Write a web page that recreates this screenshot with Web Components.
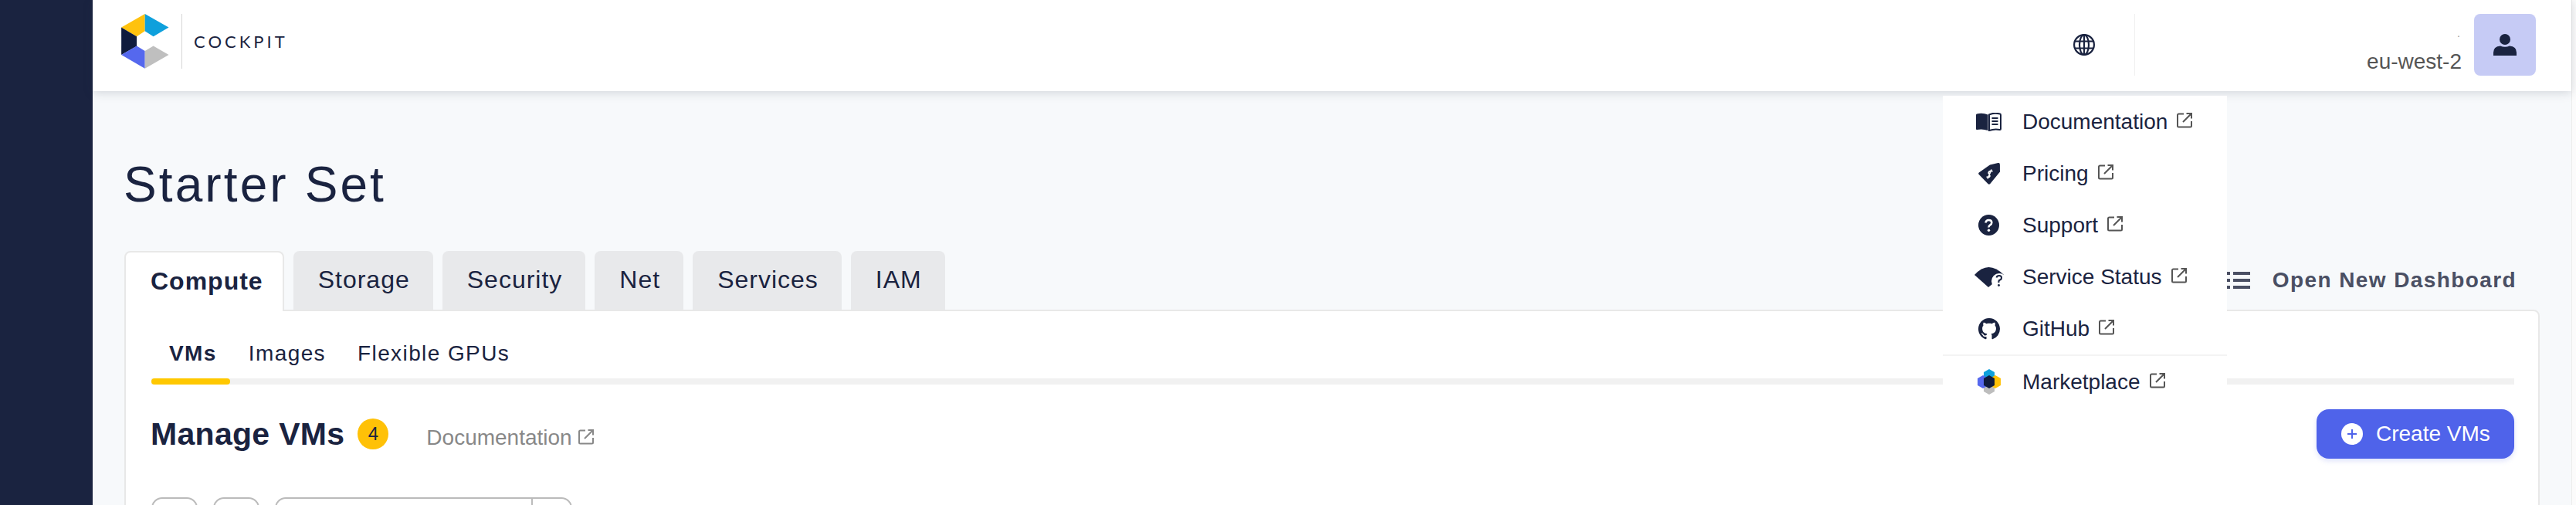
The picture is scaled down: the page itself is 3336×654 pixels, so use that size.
<!DOCTYPE html>
<html>
<head>
<meta charset="utf-8">
<title>Cockpit</title>
<style>
  html, body { margin: 0; height: 100%; overflow: hidden; }
  body { font-family: "Liberation Sans", Arial, sans-serif; color: #1a2340; background: #f7f9fb; }
</style>
</head>
<body>
<cockpit-app></cockpit-app>

<script>
const EXT_ICON = `<svg class="ext" width="20" height="20" viewBox="0 0 20 20" fill="none" stroke="#555" stroke-width="2"><path d="M9 1.5H2.5a1.5 1.5 0 0 0-1.5 1.5v14a1.5 1.5 0 0 0 1.500 1.500h15a1.500 1.500 0 0 0 1.500-1.500V11"/><path d="M8 12 19 1M12.500 1H19v6.500"/></svg>`;

const ICONS = {
  book: `<svg width="33" height="24" viewBox="0 0 33 24"><path fill="#1a2340" d="M0 3q0-1 1-1.400Q8-.5 15.500 2.500V23q-7-2.500-14.500-1q-1 0-1-1z"/><path fill="none" stroke="#1a2340" stroke-width="2" d="M17 2.500Q23-.5 31 1.500q1 .3 1 1.500v18q0 1-1 1q-7-1.500-14 1zM20.500 7h8M20.500 11h8M20.500 15h8"/></svg>`,
  tag: `<svg width="28" height="28" viewBox="0 0 28 28"><path fill="#1a2340" d="M.8 12.500 15 2.500 25.500 0q2.300-.3 2.400 2L28 11.500 15.300 27q-1.200 1.400-2.600.3L.8 15q-1.200-1.300 0-2.500z"/><path fill="none" stroke="#fff" stroke-width="1.700" d="M18.500 11q-2.300-1.500-4.200 0t-.5 3.200 1 3.300-4.300 .5M17 8.500 12 20.500"/></svg>`,
  help: `<svg width="27" height="27" viewBox="0 0 27 27"><circle cx="13.500" cy="13.500" r="13.500" fill="#1a2340"/><path fill="none" stroke="#fff" stroke-width="2.600" d="M9.500 10.500q.3-3.500 4-3.500t3.800 3.200q0 2-2 3.200t-1.800 3.100"/><circle cx="13.500" cy="20.300" r="1.700" fill="#fff"/></svg>`,
  status: `<svg width="38" height="26" viewBox="0 0 38 26"><path fill="#1a2340" d="M0 10Q18-10 38 10L18 26z"/><circle cx="32" cy="18" r="10" fill="#fff"/><path fill="none" stroke="#1a2340" stroke-width="2" d="M28.500 13.500q.5-2.500 3.500-2.500t3 2.500-2 3-1.500 3.500"/><circle cx="31.500" cy="23.500" r="1.400" fill="#1a2340"/></svg>`,
  github: `<svg width="28" height="28" viewBox="0 0 16 16"><path fill="#1a2340" d="M8 0C3.580 0 0 3.580 0 8c0 3.540 2.290 6.530 5.470 7.590.4.070.55-.17.55-.38 0-.19-.01-.82-.01-1.490-2.010.37-2.530-.49-2.690-.94-.09-.23-.48-.94-.82-1.130-.28-.15-.68-.52-.01-.53.63-.01 1.080.58 1.230.82.72 1.210 1.870.87 2.330.66.070-.52.28-.87.51-1.070-1.780-.2-3.640-.89-3.640-3.950 0-.87.31-1.590.82-2.150-.08-.2-.36-1.020.08-2.120 0 0 .67-.21 2.200.82.64-.18 1.320-.27 2-.27.68 0 1.360.09 2 .27 1.530-1.040 2.200-.82 2.200-.82.44 1.100.16 1.920.08 2.120.51.56.82 1.270.82 2.150 0 3.070-1.870 3.750-3.650 3.950.29.25.54.73.54 1.480 0 1.070-.01 1.930-.01 2.200 0 .21.15.46.55.38A8.013 8.013 0 0 0 16 8c0-4.420-3.580-8-8-8z"/></svg>`,
  market: `<svg width="30" height="33" viewBox="0 0 30 33"><path fill="#0ea0dc" d="M15 0l7 4v8l-7 4-7-4V4z"/><path fill="#bdbdbd" d="M15 17l7 4v8l-7 4-7-4v-8z"/><path fill="#5568ee" d="M7 8l7 4v9l-7 4-7-4v-9z"/><path fill="#ffc107" d="M23 8l7 4v9l-7 4-7-4v-9z"/><path fill="#0f1b3d" d="M15 8l7 4v9l-7 4-7-4v-9z"/></svg>`
};

class CockpitLogo extends HTMLElement {
  constructor() {
    super();
    this.attachShadow({ mode: 'open' }).innerHTML = `
      <style>
        :host { display: flex; align-items: center; height: 71px; margin-bottom: 9px; }
        .sep { width: 1px; height: 71px; background: #d6d6d6; margin: 0 15px 0 16px; }
        span { font-family: Lato, sans-serif; font-weight: 400; font-size: 22px; letter-spacing: 4px; color: #1a2340; }
        svg { display: block; }
      </style>
      <svg width="62" height="71" viewBox="80 55 186 214">
        <path fill="#ffc20e" d="M172 55v67l-32 21-60-35z"/>
        <path fill="#0ea0dc" d="M172 55l93 53-60 35-33-21z"/>
        <path fill="#0f1b3d" d="M80 108l60 35v38l-60 34z"/>
        <path fill="#5568ee" d="M80 215l60-35 32 20v68z"/>
        <path fill="#bfbfbf" d="M172 200l33-20 60 35-93 53z"/>
      </svg>
      <div class="sep"></div>
      <span>COCKPIT</span>`;
  }
}

class TopBar extends HTMLElement {
  constructor() {
    super();
    this.attachShadow({ mode: 'open' }).innerHTML = `
      <style>
        :host { display: flex; align-items: center; height: 118px; box-sizing: border-box; padding: 0 46px 2px 37px; background: #fff; box-shadow: 0 2px 12px rgba(40, 50, 70, .18); position: relative; z-index: 2; }
        .fill { flex: 1; }
        .globe { display: block; }
        .sep { width: 1px; height: 80px; background: #f0f0f0; margin-left: 51px; }
        .region { flex: 0 0 auto; width: 423px; margin: 14px 16px 0 0; text-align: right; font-size: 28px; line-height: 32px; color: #555; }
        .region div:first-child { font-size: 14px; line-height: 18px; color: #999; padding-bottom: 12px; padding-right: 2px; }
        .avatar { width: 80px; height: 80px; border-radius: 8px; background: #c6cbf5; display: flex; align-items: center; justify-content: center; }
      </style>
      <cockpit-logo></cockpit-logo>
      <div class="fill"></div>
      <svg class="globe" width="28" height="28" viewBox="0 0 28 28" fill="none" stroke="#1a2340" stroke-width="2.200">
        <circle cx="14" cy="14" r="12.900"/>
        <ellipse cx="14" cy="14" rx="6" ry="12.900"/>
        <path d="M14 1v26M2 9.500h24M2 18.500h24"/>
      </svg>
      <div class="sep"></div>
      <div class="region"><div>.</div><div>eu-west-2</div></div>
      <div class="avatar">
        <svg width="30" height="28" viewBox="0 0 30 28" fill="#1a2340"><circle cx="15" cy="7" r="7"/><path d="M0 28v-4q0-8 9-8.500 6 2.500 12 0 9 .5 9 8.500v4z"/></svg>
      </div>`;
  }
}

class MenuItem extends HTMLElement {
  constructor() {
    super();
    this.attachShadow({ mode: 'open' }).innerHTML = `
      <style>
        :host { display: flex; align-items: center; height: 67px; font-size: 28px; color: #1a2340; }
        .ico { flex: none; width: 103px; box-sizing: border-box; padding: 0 22px 0 38px; display: flex; justify-content: center; }
        .ext { margin: -4px 0 0 12px; display: block; }
      </style>
      <div class="ico"><slot name="icon"></slot></div>
      <slot></slot>${EXT_ICON}`;
  }
}

class ResourcesMenu extends HTMLElement {
  constructor() {
    super();
    const row = (icon, label) => `<menu-item><span slot="icon">${ICONS[icon]}</span>${label}</menu-item>`;
    this.attachShadow({ mode: 'open' }).innerHTML = `
      <style>
        :host { position: absolute; left: 2516px; top: 124px; width: 368px; height: 410px; background: #fff; z-index: 3; display: block; }
        hr { height: 2px; border: 0; margin: 0; background: #f4f4f4; }
        span { display: block; line-height: 0; }
      </style>
      ${row('book', 'Documentation')}
      ${row('tag', 'Pricing')}
      ${row('help', 'Support')}
      ${row('status', 'Service Status')}
      ${row('github', 'GitHub')}
      <hr>
      ${row('market', 'Marketplace')}`;
  }
}

class TabStrip extends HTMLElement {
  constructor() {
    super();
    const tabs = ['Compute', 'Storage', 'Security', 'Net', 'Services', 'IAM'];
    this.attachShadow({ mode: 'open' }).innerHTML = `
      <style>
        :host { display: flex; align-items: flex-end; height: 78px; gap: 12px; margin-bottom: -2px; position: relative; z-index: 1; }
        .tab { height: 76px; padding: 0 30px 2px 32px; display: flex; align-items: center; font-size: 32px; letter-spacing: 1px; border-radius: 8px 8px 0 0; background: #e8e9eb; color: #1a2340; box-sizing: border-box; margin-bottom: 2px; }
        .tab.on { height: 78px; margin-bottom: 0; font-weight: 700; background: #fff; border: 2px solid #e8e8e8; border-bottom: 0; padding: 0 25px 2px 32px; }
        .fill { flex: 1; }
        .open { display: flex; align-items: center; gap: 29px; height: 78px; margin-right: 30px; padding-bottom: 2px; box-sizing: border-box; font-size: 28px; font-weight: 700; letter-spacing: 1.400px; color: #4a4f63; }
        svg { display: block; }
      </style>
      ${tabs.map((t, i) => `<div class="tab${i ? '' : ' on'}">${t}</div>`).join('')}
      <div class="fill"></div>
      <div class="open">
        <svg width="30" height="22" viewBox="0 0 30 22" fill="#4a4f63"><path d="M0 0h4v4H0zM0 9h4v4H0zM0 18h4v4H0zM8 0h22v4H8zM8 9h22v4H8zM8 18h22v4H8z"/></svg>
        Open New Dashboard
      </div>`;
  }
}

class SubTabs extends HTMLElement {
  constructor() {
    super();
    this.attachShadow({ mode: 'open' }).innerHTML = `
      <style>
        :host { display: block; border-bottom: 8px solid #f1f1f1; position: relative; }
        .row { display: flex; height: 87px; align-items: center; font-size: 28px; letter-spacing: 1.400px; gap: 41px; padding: 22px 0 0 23px; box-sizing: border-box; }
        b { font-weight: 700; }
        .bar { position: absolute; left: 0; bottom: -8px; width: 102px; height: 8px; border-radius: 4px; background: #ffc800; }
      </style>
      <div class="row"><b>VMs</b><span>Images</span><span>Flexible GPUs</span></div>
      <div class="bar"></div>`;
  }
}

class VmHeader extends HTMLElement {
  constructor() {
    super();
    this.attachShadow({ mode: 'open' }).innerHTML = `
      <style>
        :host { display: flex; align-items: center; height: 64px; margin-top: 32px; }
        h2 { margin: 0; font-size: 41px; font-weight: 700; letter-spacing: .3px; color: #1a2340; margin-left: -1px; }
        .badge { width: 40px; height: 40px; border-radius: 50%; background: #ffc107; margin-left: 17px; display: flex; align-items: center; justify-content: center; font-size: 24px; color: #1a2340; }
        .doc { display: flex; align-items: center; margin: 10px 0 0 49px; font-size: 28px; color: #888; }
        .doc svg { margin: -2px 0 0 8px; }
        .doc svg * { stroke: #888; }
        .fill { flex: 1; }
        button { display: flex; align-items: center; gap: 17px; width: 256px; height: 64px; padding: 0 0 0 32px; box-sizing: border-box; border: 0; border-radius: 16px; background: #4f63ea; color: #fff; font: 28px "Liberation Sans", Arial, sans-serif; box-shadow: 0 3px 6px rgba(79, 99, 234, .18); }
      </style>
      <h2>Manage VMs</h2>
      <div class="badge">4</div>
      <div class="doc">Documentation${EXT_ICON}</div>
      <div class="fill"></div>
      <button>
        <svg width="28" height="28" viewBox="0 0 28 28"><circle cx="14" cy="14" r="14" fill="#fff"/><path d="M14 8v12M8 14h12" stroke="#4f63ea" stroke-width="2"/></svg>
        Create VMs
      </button>`;
  }
}

class FilterBar extends HTMLElement {
  constructor() {
    super();
    this.attachShadow({ mode: 'open' }).innerHTML = `
      <style>
        :host { display: flex; gap: 20px; margin-top: 50px; }
        div { height: 60px; box-sizing: border-box; border: 2px solid #bbb; border-radius: 14px; background: #fff; }
        .btn { width: 60px; }
        .search { width: 385px; display: flex; justify-content: flex-end; }
        .search i { width: 49px; border-left: 2px solid #bbb; display: block; }
      </style>
      <div class="btn"></div>
      <div class="btn"></div>
      <div class="search"><i></i></div>`;
  }
}

class ContentCard extends HTMLElement {
  constructor() {
    super();
    this.attachShadow({ mode: 'open' }).innerHTML = `
      <style>
        :host { display: block; flex: 1; background: #fff; border: 2px solid #e8e8e8; border-radius: 0 8px 0 0; padding: 0 31px 0 33px; }
      </style>
      <slot></slot>`;
  }
}

class CockpitApp extends HTMLElement {
  constructor() {
    super();
    this.attachShadow({ mode: 'open' }).innerHTML = `
      <style>
        :host { display: grid; grid-template-columns: 120px 1fr 6px; height: 654px; overflow: hidden; position: relative; }
        .side { background: #1a2340; }
        .edge { background: #fbfbfb; border-left: 1px solid #ececec; }
        main { display: flex; flex-direction: column; min-width: 0; }
        .page { flex: 1; display: flex; flex-direction: column; padding: 0 41px 0 41px; }
        h1 { margin: 0; height: 207px; box-sizing: border-box; padding-top: 85px; font-size: 64px; line-height: 72px; font-weight: 400; letter-spacing: 3.100px; color: #1a2340; margin-left: -1px; }
      </style>
      <div class="side"></div>
      <main>
        <top-bar></top-bar>
        <div class="page">
          <h1>Starter Set</h1>
          <tab-strip></tab-strip>
          <content-card>
            <sub-tabs></sub-tabs>
            <vm-header></vm-header>
            <filter-bar></filter-bar>
          </content-card>
        </div>
      </main>
      <div class="edge"></div>
      <resources-menu></resources-menu>`;
  }
}

customElements.define('cockpit-logo', CockpitLogo);
customElements.define('top-bar', TopBar);
customElements.define('menu-item', MenuItem);
customElements.define('resources-menu', ResourcesMenu);
customElements.define('tab-strip', TabStrip);
customElements.define('sub-tabs', SubTabs);
customElements.define('vm-header', VmHeader);
customElements.define('filter-bar', FilterBar);
customElements.define('content-card', ContentCard);
customElements.define('cockpit-app', CockpitApp);
</script>
</body>
</html>
